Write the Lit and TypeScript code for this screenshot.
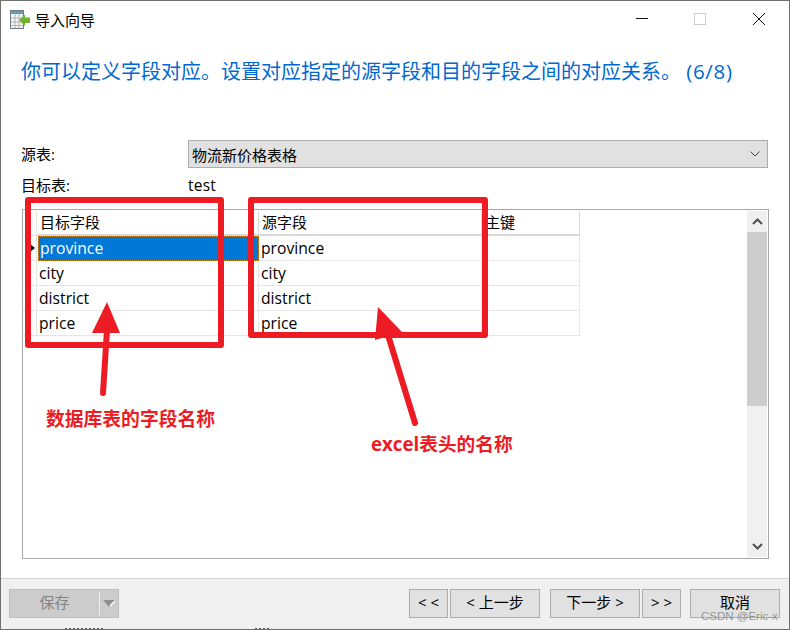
import { LitElement, html, css, svg } from "lit";
import { customElement } from "lit/decorators.js";

const ROWS = ["province", "city", "district", "price"];

@customElement("app-root")
export class AppRoot extends LitElement {
  static styles = css`
    :host {
      display: block;
      width: 790px;
      height: 630px;
      position: relative;
      overflow: hidden;
      background: #fff;
      font-family: "Open Sans", "Noto Sans CJK SC", sans-serif;
      color: #000;
    }
    .window {
      box-sizing: border-box;
      width: 790px;
      height: 630px;
      border: 1px solid #6f6f6f;
      display: flex;
      flex-direction: column;
      background: #fff;
    }
    .title {
      height: 38px;
      display: flex;
      align-items: center;
      padding-left: 9px;
      flex: none;
    }
    .title svg.app { flex: none; width: 21px; height: 20px; }
    .title .t {
      margin-left: 4px;
      font-size: 15px;
      line-height: 20px;
      font-family: "Noto Sans CJK SC", sans-serif;
    }
    .ctrl { margin-left: auto; display: flex; align-items: center; padding-right: 6px; }
    .ctrl svg { width: 152px; height: 20px; display: block; }
    .head {
      margin: 18px 0 0 20px;
      height: 30px;
      font-size: 20px;
      line-height: 30px;
      color: #0068d0;
      white-space: nowrap;
      flex: none;
    }
    .head .step { font-size: 20.5px; letter-spacing: 0.7px; line-height: 20px; }
    .src {
      display: flex;
      align-items: center;
      margin: 53px 0 0 20px;
      height: 28px;
      flex: none;
    }
    .lbl { width: 167px; font-size: 15px; line-height: 20px; color: #000; }
    .combo {
      box-sizing: border-box;
      width: 580px;
      height: 28px;
      background: #e1e1e1;
      border: 1px solid #adadad;
      display: flex;
      align-items: center;
      justify-content: space-between;
      padding: 0 7px 0 3px;
      font-size: 15px;
    }
    .combo svg { width: 10px; height: 6px; }
    .tgt {
      display: flex;
      align-items: center;
      margin: 7px 0 0 20px;
      height: 20px;
      flex: none;
    }
    .tgt .v { font-size: 15.5px; letter-spacing: 0.2px; color: #000; }
    .box {
      box-sizing: border-box;
      margin: 14px 0 0 21px;
      width: 747px;
      height: 350px;
      border: 1px solid #a8a8a8;
      display: flex;
      justify-content: space-between;
      flex: none;
    }
    .grid {
      display: grid;
      grid-template-columns: 14px 222px 223px 98px;
      grid-auto-rows: 25px;
      align-content: start;
      margin-top: 1px;
    }
    .c {
      box-sizing: border-box;
      border-right: 1px solid #e6e6e6;
      border-bottom: 1px solid #e6e6e6;
      padding-left: 2px;
      font-size: 15.7px;
      line-height: 24px;
      white-space: nowrap;
      overflow: hidden;
      color: #000;
    }
    .c.h { font-size: 15px; border-color: #d8d8d8; border-bottom-width: 2px; line-height: 23px; padding-left: 3px; }
    .c.ind { padding: 0; position: relative; }
    .c.ind.h { border-bottom-width: 1px; border-color: #e6e6e6; }
    .c.sel {
      background: #0078d7;
      color: #fff;
      outline: 1px dotted #e08a1e;
      outline-offset: -1px;
      border-color: #0078d7;
      padding-left: 2px;
      margin-left: 1px;
    }
    .ind svg { position: absolute; left: 7px; top: 8px; width: 5px; height: 8px; }
    .bar {
      width: 20px;
      background: #f0f0f0;
      display: flex;
      flex-direction: column;
      margin: 1px 1px 1px 0;
    }
    .bar .arrow { height: 21px; display: flex; align-items: center; justify-content: center; flex: none; }
    .bar svg { width: 11px; height: 7px; }
    .bar .thumb { height: 174px; background: #cdcdcd; flex: none; }
    .bar .sp { flex: 1; }
    .gap { flex: 1; }
    .foot {
      box-sizing: border-box;
      height: 51px;
      flex: none;
      background: #f0f0f0;
      border-top: 1px solid #d4d4d4;
      display: flex;
      align-items: center;
      padding: 0 9px 1px 8px;
    }
    .btn {
      box-sizing: border-box;
      height: 29px;
      background: #e1e1e1;
      border: 1px solid #adadad;
      font-size: 15px;
      line-height: 25px;
      text-align: center;
      color: #000;
      white-space: nowrap;
    }
    .save {
      width: 110px;
      display: flex;
      background: #cccccc;
      border-color: #bfbfbf;
      color: #838383;
    }
    .save .m { flex: 1; text-align: center; }
    .save .d { width: 18px; border-left: 1px solid #efefef; margin: 2px 0; display: flex; align-items: center; justify-content: center; }
    .save svg { width: 12px; height: 7px; }
    .n1 { width: 39px; margin-left: auto; }
    .n2 { width: 90px; margin-left: 2px; }
    .n3 { width: 90px; margin-left: 10px; }
    .n4 { width: 39px; margin-left: 2px; }
    .n5 { width: 90px; margin-left: 9px; }
    .overlay { position: absolute; left: 0; top: 0; width: 790px; height: 630px; pointer-events: none; }
    .note {
      position: absolute;
      color: #ed1c24;
      font-weight: 700;
      font-size: 18.8px;
      line-height: 24px;
      white-space: nowrap;
    }
    .n-a { left: 46px; top: 407px; }
    .n-b { left: 371px; top: 432px; font-size: 18.7px; }
    .mark {
      position: absolute;
      left: 701px;
      top: 608px;
      font-size: 11.5px;
      line-height: 16px;
      color: rgba(120, 120, 120, 0.75);
      white-space: nowrap;
      font-family: "Liberation Sans", sans-serif;
    }
  `;

  private icon() {
    return html`<svg class="app" viewBox="0 0 21 20">
      <rect x="0.5" y="0.5" width="13" height="18" fill="#f2f2f2" stroke="#6e7b86"/>
      <rect x="1" y="1" width="12" height="3" fill="#5f9fb0"/>
      <path d="M1 8h12M1 12h12M1 15.5h12M5 4v14M9 4v14" stroke="#b5b5b5" fill="none"/>
      <path d="M9 10 L15 4.5 V7.5 H20 V13 H15 V16 Z" fill="#6cb52d"/>
    </svg>`;
  }

  render() {
    return html`
      <div class="window">
        <div class="title">
          ${this.icon()}
          <span class="t">导入向导</span>
          <div class="ctrl">
            <svg viewBox="0 0 152 20">
              <path d="M5 8.5h12" stroke="#111" stroke-width="1" fill="none"/>
              <rect x="63.5" y="3.5" width="11" height="11" fill="none" stroke="#cccccc"/>
              <path d="M122 3l12 12M134 3l-12 12" stroke="#111" fill="none"/>
            </svg>
          </div>
        </div>
        <div class="head">你可以定义字段对应。设置对应指定的源字段和目的字段之间的对应关系。 <span class="step">(6/8)</span></div>
        <div class="src">
          <div class="lbl">源表:</div>
          <div class="combo">
            <span>物流新价格表格</span>
            <svg viewBox="0 0 10 6"><path d="M0.5 0.5L5 5L9.5 0.5" fill="none" stroke="#444"/></svg>
          </div>
        </div>
        <div class="tgt"><div class="lbl">目标表:</div><div class="v">test</div></div>
        <div class="box">
          <div class="grid">
            <div class="c ind h"></div>
            <div class="c h">目标字段</div>
            <div class="c h">源字段</div>
            <div class="c h">主键</div>
            ${ROWS.map(
              (r, i) => html`
                <div class="c ind">
                  ${i === 0
                    ? svg`<svg viewBox="0 0 5 8"><path d="M0 0L5 4L0 8Z" fill="#000"/></svg>`
                    : ""}
                </div>
                <div class="c ${i === 0 ? "sel" : ""}">${r}</div>
                <div class="c">${r}</div>
                <div class="c"></div>
              `
            )}
          </div>
          <div class="bar">
            <div class="arrow"><svg viewBox="0 0 11 7"><path d="M1 6L5.5 1.5L10 6" fill="none" stroke="#505050" stroke-width="2"/></svg></div>
            <div class="thumb"></div>
            <div class="sp"></div>
            <div class="arrow"><svg viewBox="0 0 11 7"><path d="M1 1L5.5 5.5L10 1" fill="none" stroke="#505050" stroke-width="2"/></svg></div>
          </div>
        </div>
        <div class="gap"></div>
        <div class="foot">
          <div class="btn save">
            <span class="m">保存</span>
            <span class="d"><svg viewBox="0 0 12 7"><path d="M0 0H12L6 7Z" fill="#8f8f8f"/><path d="M7 6L12 1" stroke="#fff" stroke-width="1.5"/></svg></span>
          </div>
          <div class="btn n1">&lt; &lt;</div>
          <div class="btn n2">&lt; 上一步</div>
          <div class="btn n3">下一步 &gt;</div>
          <div class="btn n4">&gt; &gt;</div>
          <div class="btn n5">取消</div>
        </div>
      </div>
      <svg class="overlay" viewBox="0 0 790 630">
        <g fill="none" stroke="#ed1c24" stroke-width="6" stroke-linejoin="round" stroke-linecap="round">
          <rect x="28" y="200" width="193" height="145"/>
          <rect x="251" y="200" width="234" height="135"/>
          <path d="M107 330L103 393" />
          <path d="M388 335L415 423" />
        </g>
        <path d="M107 302L120 333L92 333Z" fill="#ed1c24"/>
        <path d="M378 307L402 332L375 340Z" fill="#ed1c24"/>
        <path d="M65 628.5H104M255 628.5H270" stroke="#555" stroke-dasharray="2 2" fill="none"/>
      </svg>
      <div class="note n-a">数据库表的字段名称</div>
      <div class="note n-b">excel表头的名称</div>
      <div class="mark">CSDN @Eric-x</div>
    `;
  }
}
